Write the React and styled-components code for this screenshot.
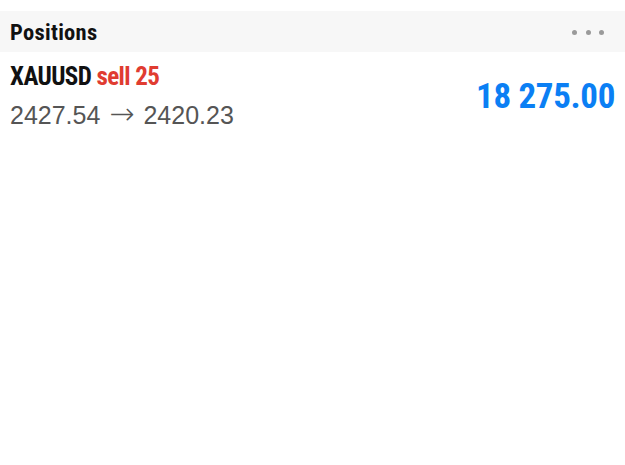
import React from "react";
import styled, { createGlobalStyle } from "styled-components";

const GlobalStyle = createGlobalStyle`
  body {
    margin: 0;
    background: #fff;
    font-family: "Liberation Sans", Arial, sans-serif;
  }
`;

const Page = styled.div`
  width: 625px;
  height: 465px;
  overflow: hidden;
  background: #fff;
  padding-top: 11px;
  box-sizing: border-box;
`;

const Header = styled.div`
  display: flex;
  align-items: center;
  justify-content: space-between;
  height: 41px;
  padding: 0 21px 0 10px;
  background: #f7f7f7;
`;

const Title = styled.h2`
  margin: 0;
  font-family: Roboto, "Roboto Condensed", sans-serif;
  font-stretch: 87.5%;
  font-weight: 700;
  font-size: 22.5px;
  letter-spacing: 0.3px;
  color: #111;
`;

const Dots = styled.div`
  display: flex;
  gap: 8.5px;
  padding-top: 1px;
`;

const Dot = styled.span`
  width: 5px;
  height: 5px;
  border-radius: 50%;
  background: #9a9a9a;
`;

const Row = styled.div`
  display: flex;
  align-items: center;
  justify-content: space-between;
  padding: 10px 10px 2px 10px;
`;

const Info = styled.div`
  display: flex;
  flex-direction: column;
`;

const Symbol = styled.div`
  font-family: Roboto, "Roboto Condensed", sans-serif;
  font-stretch: 87.5%;
  font-weight: 700;
  font-size: 25px;
  line-height: 30px;
  letter-spacing: -0.6px;
  color: #111;
`;

const Side = styled.span`
  color: ${(p) => (p.type === "sell" ? "#e03c31" : "#1a7ff0")};
`;

const Prices = styled.div`
  margin-top: 7px;
  font-size: 25px;
  line-height: 30px;
  color: #555;
`;

const Arrow = styled.span`
  font-family: "DejaVu Sans", sans-serif;
  font-weight: 200;
  font-size: 30px;
  margin: 0 2px;
`;

const Profit = styled.div`
  font-family: Roboto, "Roboto Condensed", sans-serif;
  font-stretch: 87.5%;
  font-weight: 700;
  font-size: 35px;
  letter-spacing: -0.35px;
  color: #0b7ff4;
`;

const positions = [
  { symbol: "XAUUSD", type: "sell", volume: 25, open: "2427.54", close: "2420.23", profit: "18 275.00" },
];

const App = () => {
  return (
    <Page>
      <GlobalStyle />
      <Header>
        <Title>Positions</Title>
        <Dots>
          <Dot />
          <Dot />
          <Dot />
        </Dots>
      </Header>
      {positions.map((p) => (
        <Row key={p.symbol}>
          <Info>
            <Symbol>
              {p.symbol} <Side type={p.type}>{p.type} {p.volume}</Side>
            </Symbol>
            <Prices>
              {p.open} <Arrow>→</Arrow> {p.close}
            </Prices>
          </Info>
          <Profit>{p.profit}</Profit>
        </Row>
      ))}
    </Page>
  );
};

export default App;
